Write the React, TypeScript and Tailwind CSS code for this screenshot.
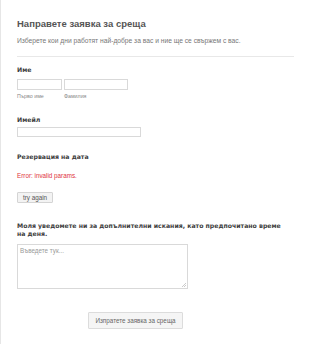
const label = "font-['DejaVu_Sans',Verdana,sans-serif] text-[6.2px] font-bold text-[#3d3d3d] leading-[8px]";

export default function App() {
  return (
    <div className="w-[310px] h-[344px] bg-white border-l border-[#e6e6e6] overflow-hidden font-['Liberation_Sans',Arial,sans-serif]">
      <div className="pl-[16px] pr-[16px] pt-[18px]">
        <h1 className="text-[9.5px] leading-[12px] font-bold text-[#555]">
          Направете заявка за среща
        </h1>
        <p className="mt-[7px] text-[6.7px] leading-[8px] text-[#777]">
          Изберете кои дни работят най-добре за вас и ние ще се свържем с вас.
        </p>
        <div className="mt-[11px] h-px w-[277px] bg-[#e8e8e8]" />

        <div className={`mt-[9px] ${label}`}>Име</div>
        <div className="mt-[5px] flex gap-[2px]">
          <div className="flex flex-col">
            <div className="w-[45px] h-[11px] border border-[#d9d9d9] bg-white" />
            <span className="mt-[3px] text-[5.3px] leading-[6px] text-[#888]">Първо име</span>
          </div>
          <div className="flex flex-col">
            <div className="w-[64px] h-[11px] border border-[#d9d9d9] bg-white" />
            <span className="mt-[3px] text-[5.3px] leading-[6px] text-[#888]">Фамилия</span>
          </div>
        </div>

        <div className={`mt-[17px] ${label}`}>Имейл</div>
        <div className="mt-[3px] w-[124px] h-[10px] border border-[#d9d9d9] bg-white" />

        <div className={`mt-[16px] ${label}`}>Резервация на дата</div>
        <div className="mt-[11px] text-[6.3px] leading-[8px] text-[#e0343d]">Error: invalid params.</div>
        <button className="mt-[12px] block w-[36px] h-[11px] border border-[#d4d4d4] bg-[#f3f3f3] text-[6.3px] leading-[9px] text-[#555] rounded-[1px]">
          try again
        </button>

        <div className={`mt-[19px] w-[272px] ${label}`}>
          Моля уведомете ни за допълнителни искания, като предпочитано време на деня.
        </div>
        <div className="relative mt-[6px] w-[171px] h-[45px] border border-[#d9d9d9] bg-white">
          <span className="absolute left-[2px] top-[2px] text-[6.3px] leading-[8px] text-[#999]">Въведете тук...</span>
          <svg className="absolute right-[1px] bottom-[1px]" width="4" height="4" viewBox="0 0 4 4">
            <path d="M4 0L0 4M4 2L2 4" stroke="#aaa" strokeWidth="0.6" />
          </svg>
        </div>

        <button className="mt-[23px] ml-[71px] block w-[95px] h-[17px] border border-[#dcdcdc] bg-[#f5f5f5] text-[6.3px] text-[#666] rounded-[1px]">
          Изпратете заявка за среща
        </button>
      </div>
    </div>
  );
}
